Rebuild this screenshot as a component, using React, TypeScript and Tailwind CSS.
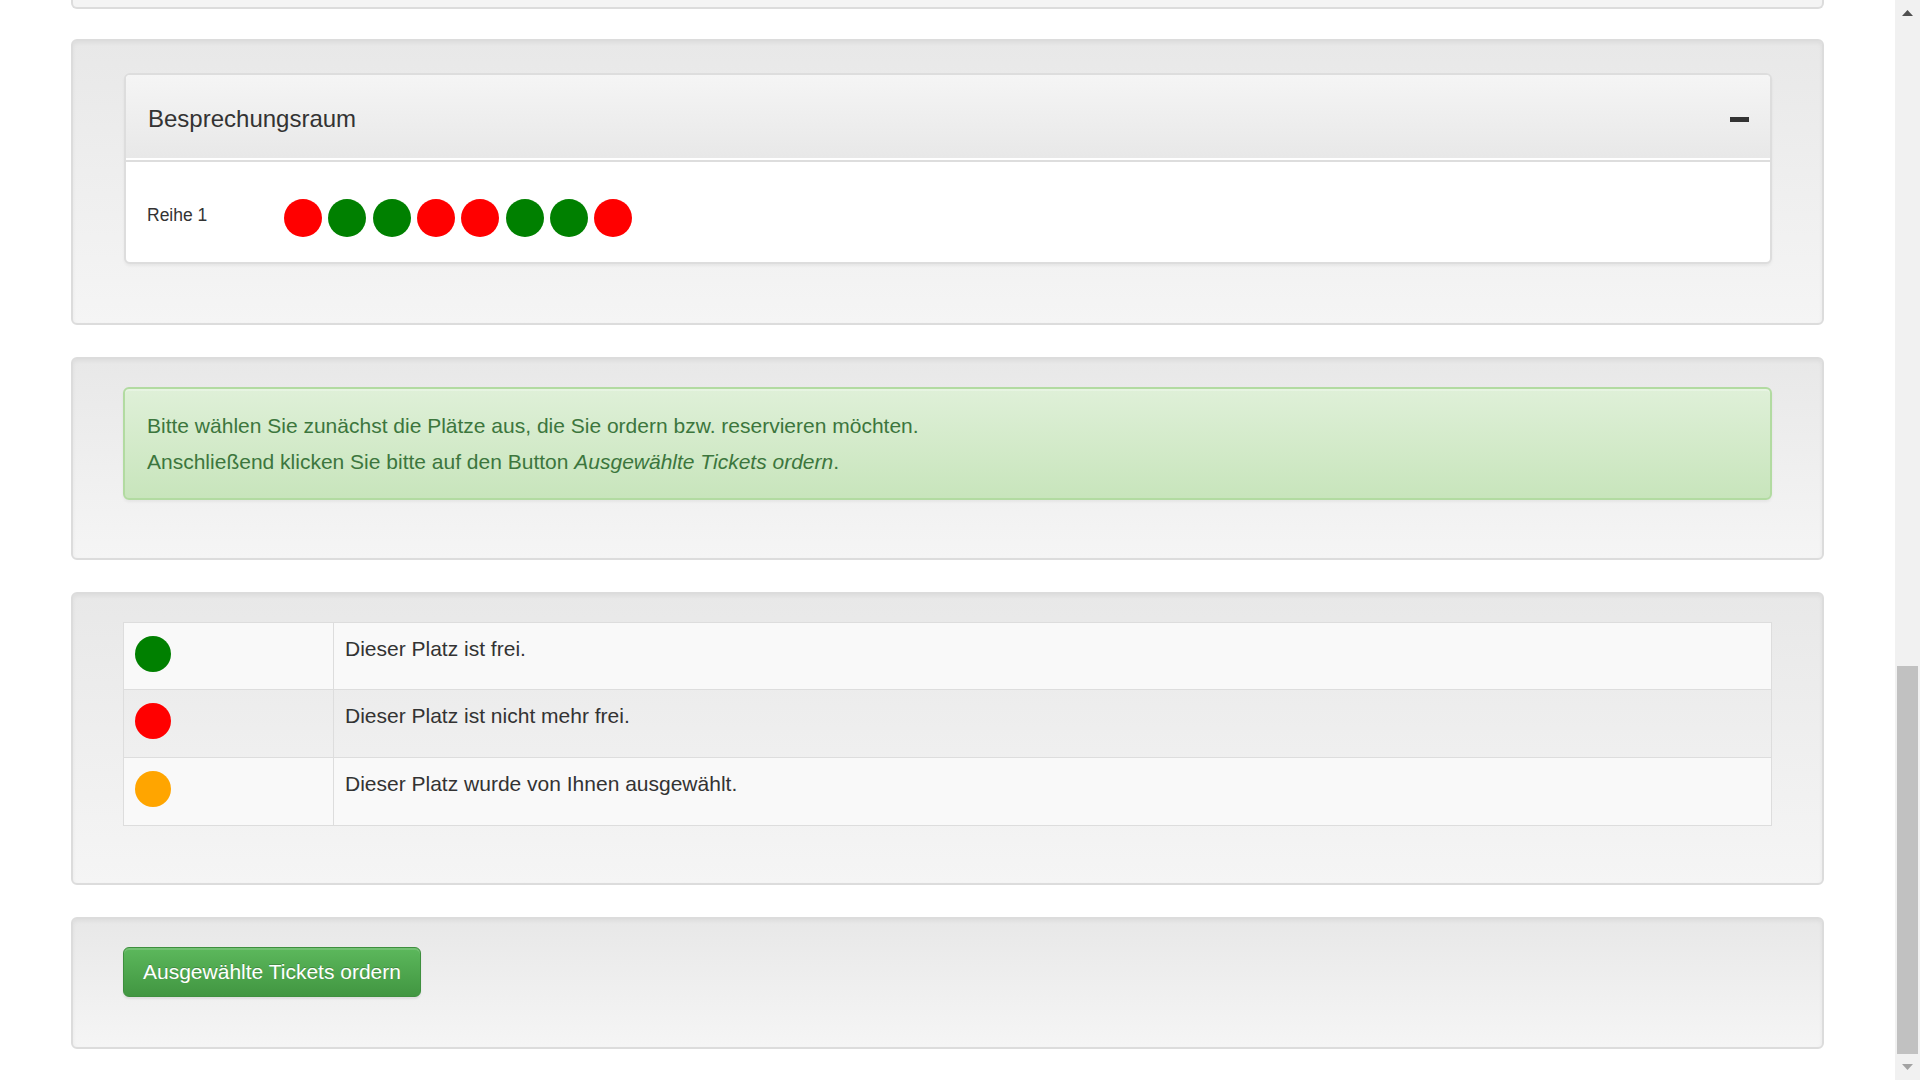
import React from "react";

type SeatColor = "red" | "green" | "orange";

const seatClass: Record<SeatColor, string> = {
  red: "bg-[#ff0000]",
  green: "bg-[#008000]",
  orange: "bg-[#ffa500]",
};

function Well({ className, children }: { className: string; children: React.ReactNode }) {
  return (
    <div
      className={
        "rounded-[6px] border-2 border-[#dcdcdc] bg-linear-to-b from-[#e8e8e8] to-[#f5f5f5] px-[50px] shadow-[inset_0_2px_4px_rgba(0,0,0,0.05)] " +
        className
      }
    >
      {children}
    </div>
  );
}

function Scrollbar() {
  return (
    <div className="flex h-[1080px] w-[25px] shrink-0 flex-col bg-[#f1f1f1]">
      <div className="flex h-[25px] shrink-0 items-center justify-center">
        <svg width="11" height="6" viewBox="0 0 11 6">
          <polygon points="5.5,0 11,6 0,6" fill="#505050" />
        </svg>
      </div>
      <div className="h-[641px] shrink-0" />
      <div className="mx-[2px] h-[388px] shrink-0 bg-[#c1c1c1]" />
      <div className="flex flex-1 items-center justify-center">
        <svg width="11" height="6" viewBox="0 0 11 6">
          <polygon points="0,0 11,0 5.5,6" fill="#a3a3a3" />
        </svg>
      </div>
    </div>
  );
}

export default function App() {
  const seats: SeatColor[] = ["red", "green", "green", "red", "red", "green", "green", "red"];
  const legend: { color: SeatColor; text: string; h: string; bg: string }[] = [
    { color: "green", text: "Dieser Platz ist frei.", h: "h-[67px]", bg: "bg-[#f9f9f9]" },
    { color: "red", text: "Dieser Platz ist nicht mehr frei.", h: "h-[68px]", bg: "bg-transparent" },
    { color: "orange", text: "Dieser Platz wurde von Ihnen ausgewählt.", h: "h-[68px]", bg: "bg-[#f9f9f9]" },
  ];

  return (
    <div className="flex h-[1080px] w-full overflow-hidden bg-white font-['Liberation_Sans',Arial,sans-serif] text-[#333333]">
      <div className="flex-1 px-[71px]">
        {/* previous panel (cut off) */}
        <div className="h-[9px] rounded-b-[6px] border-2 border-t-0 border-[#dcdcdc] bg-[#f4f4f4]" />

        {/* Room panel */}
        <Well className="mt-[30px] pt-[32px] pb-[59px]">
          <div className="ml-[1px] overflow-hidden rounded-[6px] border-2 border-[#dddddd] bg-white shadow-[0_2px_3px_rgba(0,0,0,0.05)]">
            <div className="flex h-[85px] items-center justify-between border-b-2 border-white bg-linear-to-b from-[#f5f5f5] to-[#e8e8e8] pl-[22px] pr-[21px] pt-[4px]">
              <span className="text-[24px] leading-[26px] text-[#333333]">Besprechungsraum</span>
              <span className="mt-[2px] block h-[5px] w-[19px] bg-[#333333]" />
            </div>
            <div className="flex h-[102px] items-start border-t-2 border-[#dddddd] pl-[21px] pt-[37px]">
              <div className="mt-[7px] w-[137px] text-[17.5px] leading-[18px] text-[#333333]">Reihe 1</div>
              <div className="flex gap-[6.33px]">
                {seats.map((c, i) => (
                  <span key={i} className={"block h-[38px] w-[38px] rounded-full " + seatClass[c]} />
                ))}
              </div>
            </div>
          </div>
        </Well>

        {/* Info alert */}
        <Well className="mt-[32px] pt-[28px] pb-[58px]">
          <div className="rounded-[6px] border-2 border-[#b2dba1] bg-linear-to-b from-[#dff0d8] to-[#c8e5bc] pl-[22px] pt-[19px] pb-[18px] text-[21px] leading-[36px] text-[#3c763d] shadow-[inset_0_2px_0_rgba(255,255,255,0.25),0_2px_3px_rgba(0,0,0,0.05)]">
            <p>Bitte wählen Sie zunächst die Plätze aus, die Sie ordern bzw. reservieren möchten.</p>
            <p>
              Anschließend klicken Sie bitte auf den Button <em>Ausgewählte Tickets ordern</em>.
            </p>
          </div>
        </Well>

        {/* Legend */}
        <Well className="mt-[32px] pt-[28px] pb-[57px]">
          <div className="border-x border-b border-[#dddddd]">
            {legend.map((row, i) => (
              <div key={i} className={"flex border-t border-[#dddddd] " + row.h + " " + row.bg}>
                <div className="w-[210px] shrink-0 border-r border-[#dddddd] pl-[11px] pt-[13px]">
                  <span className={"block h-[36px] w-[36px] rounded-full " + seatClass[row.color]} />
                </div>
                <div className="pl-[11px] pt-[11px] text-[21px] leading-[30px] text-[#333333]">{row.text}</div>
              </div>
            ))}
          </div>
        </Well>

        {/* Button */}
        <Well className="mt-[32px] pt-[28px] pb-[50px]">
          <button
            type="button"
            className="rounded-[6px] border border-[#3e8f3e] bg-linear-to-b from-[#5cb85c] to-[#419641] px-[19px] py-[9px] text-[21px] leading-[30px] text-white shadow-[inset_0_2px_0_rgba(255,255,255,0.15),0_2px_2px_rgba(0,0,0,0.075)] [text-shadow:0_-1px_0_rgba(0,0,0,0.2)]"
          >
            Ausgewählte Tickets ordern
          </button>
        </Well>
      </div>
      <Scrollbar />
    </div>
  );
}
